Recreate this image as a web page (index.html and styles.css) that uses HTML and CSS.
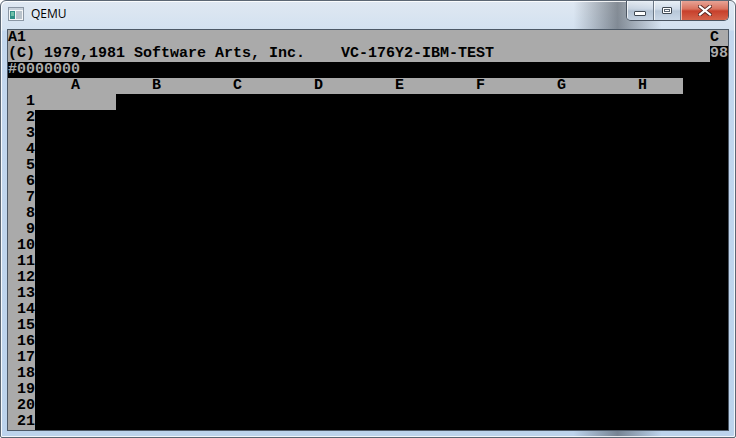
FILE: index.html
```html
<!DOCTYPE html>
<html>
<head>
<meta charset="utf-8">
<link rel="stylesheet" href="styles.css">
</head>
<body>
<div class="window">
  <div class="titlebar">
    <svg class="app-icon" width="16" height="14" viewBox="0 0 16 14">
      <rect x="0.5" y="0.5" width="15" height="13" fill="#f4f6f8" stroke="#8a96a4"/>
      <rect x="1" y="1" width="14" height="2" fill="#c9d2dc"/>
      <rect x="2" y="4" width="5" height="8" fill="#2f8f86"/>
      <rect x="3" y="5" width="3" height="4" fill="#6fc1a8"/>
      <rect x="8" y="4" width="6" height="8" fill="#b9c3cc"/>
    </svg>
    <span class="title">QEMU</span>
    <div class="buttons">
      <div class="btn btn-min"><span class="glyph-min"></span></div>
      <div class="btn btn-max"><span class="glyph-max"></span></div>
      <div class="btn btn-close">
        <svg width="14" height="11" viewBox="0 0 14 11">
          <path d="M2 1.5 L12 9.5 M12 1.5 L2 9.5" stroke="#5a2a24" stroke-width="4" stroke-linecap="square"/>
          <path d="M2 1.5 L12 9.5 M12 1.5 L2 9.5" stroke="#ffffff" stroke-width="2.2" stroke-linecap="square"/>
        </svg>
      </div>
    </div>
  </div>
  <div class="client">
    <div class="line lit split"><span>A1</span><span class="edge">C</span></div>
    <div class="line lit split"><span>(C) 1979,1981 Software Arts, Inc.    VC-176Y2-IBM-TEST</span><span class="dark">98</span></div>
    <div class="line">#0000000</div>
    <div class="sheet">
      <div class="head">
        <span class="corner"></span>
        <span class="col">A</span><span class="col">B</span><span class="col">C</span><span class="col">D</span>
        <span class="col">E</span><span class="col">F</span><span class="col">G</span><span class="col">H</span>
      </div>
      <div class="r"><span class="num">1</span><span class="cursor"></span></div>
      <div class="r"><span class="num">2</span></div>
      <div class="r"><span class="num">3</span></div>
      <div class="r"><span class="num">4</span></div>
      <div class="r"><span class="num">5</span></div>
      <div class="r"><span class="num">6</span></div>
      <div class="r"><span class="num">7</span></div>
      <div class="r"><span class="num">8</span></div>
      <div class="r"><span class="num">9</span></div>
      <div class="r"><span class="num">10</span></div>
      <div class="r"><span class="num">11</span></div>
      <div class="r"><span class="num">12</span></div>
      <div class="r"><span class="num">13</span></div>
      <div class="r"><span class="num">14</span></div>
      <div class="r"><span class="num">15</span></div>
      <div class="r"><span class="num">16</span></div>
      <div class="r"><span class="num">17</span></div>
      <div class="r"><span class="num">18</span></div>
      <div class="r"><span class="num">19</span></div>
      <div class="r"><span class="num">20</span></div>
      <div class="r"><span class="num">21</span></div>
    </div>
  </div>
</div>
</body>
</html>
```

FILE: styles.css
```css
html, body {
  margin: 0;
  padding: 0;
  background: #ffffff;
}

.window {
  width: 736px;
  height: 438px;
  box-sizing: border-box;
  border: 1px solid #5c6774;
  border-radius: 6px 6px 2px 2px;
  padding: 0 7px 7px 7px;
  background:
    linear-gradient(90deg, rgba(255,255,255,0) 0%, rgba(255,255,255,0) 78%, rgba(60,66,74,0.55) 84%, rgba(255,255,255,0) 90%),
    linear-gradient(180deg, #dfe8f2 0px, #d3e1f0 29px, #c3d7ee 30px, #bcd3ec 100%);
  box-shadow: inset 1px 1px 0 rgba(255,255,255,0.85), inset -1px -1px 0 rgba(255,255,255,0.8);
  overflow: hidden;
}

.titlebar {
  height: 29px;
  display: flex;
  align-items: flex-start;
}

.app-icon {
  margin: 6px 0 0 0;
  flex: none;
}

.title {
  margin: 5px 0 0 7px;
  font-family: "Open Sans", "Noto Sans", sans-serif;
  font-size: 12px;
  line-height: 16px;
  color: #000000;
  text-shadow: 0 0 6px rgba(255,255,255,0.9);
}

.buttons {
  margin-left: auto;
  margin-right: -1px;
  margin-top: -1px;
  display: flex;
  height: 20px;
  border: 1px solid #4b5562;
  border-top: none;
  border-radius: 0 0 5px 5px;
  overflow: hidden;
}

.btn {
  height: 20px;
  display: flex;
  align-items: center;
  justify-content: center;
  box-sizing: border-box;
}

.btn-min, .btn-max {
  width: 27px;
  background: linear-gradient(180deg, rgba(236,242,248,0.9) 0%, rgba(206,218,232,0.85) 45%, rgba(178,194,212,0.85) 55%, rgba(200,214,230,0.9) 100%);
  border-right: 1px solid #6a7684;
  box-shadow: inset 1px 1px 0 rgba(255,255,255,0.7);
}

.btn-close {
  width: 47px;
  background: linear-gradient(180deg, #e9a99c 0%, #d9735f 45%, #c7402c 55%, #d5634a 100%);
  box-shadow: inset 1px 1px 0 rgba(255,220,210,0.7);
}

.glyph-min {
  width: 10px;
  height: 3px;
  margin-top: 6px;
  background: #ffffff;
  border: 1px solid #3f4852;
  border-radius: 1px;
}

.glyph-max {
  width: 8px;
  height: 5px;
  border: 1px solid #3f4852;
  background: #ffffff;
  box-shadow: inset 0 0 0 1px #ffffff, inset 0 0 0 2px #5a6572;
  border-radius: 1px;
}

.client {
  width: 720px;
  height: 400px;
  background: #000000;
  outline: 1px solid #4d5967;
  font-family: "Liberation Mono", "DejaVu Sans Mono", monospace;
  font-weight: bold;
  font-size: 15px;
  line-height: 16px;
  color: #aaaaaa;
  overflow: hidden;
}

.line {
  height: 16px;
  white-space: pre;
}

.lit {
  background: #aaaaaa;
  color: #000000;
}

.split {
  display: flex;
  justify-content: space-between;
}

.edge {
  margin-right: 9px;
}

.dark {
  background: #000000;
  color: #aaaaaa;
}

.sheet {
  display: flex;
  flex-direction: column;
}

.head {
  display: grid;
  grid-template-columns: 27px repeat(8, 81px);
  width: 675px;
  height: 16px;
  background: #aaaaaa;
  color: #000000;
}

.col {
  text-align: center;
}

.r {
  display: flex;
  height: 16px;
}

.num {
  width: 27px;
  background: #aaaaaa;
  color: #000000;
  text-align: right;
}

.cursor {
  width: 81px;
  background: #aaaaaa;
}
```
